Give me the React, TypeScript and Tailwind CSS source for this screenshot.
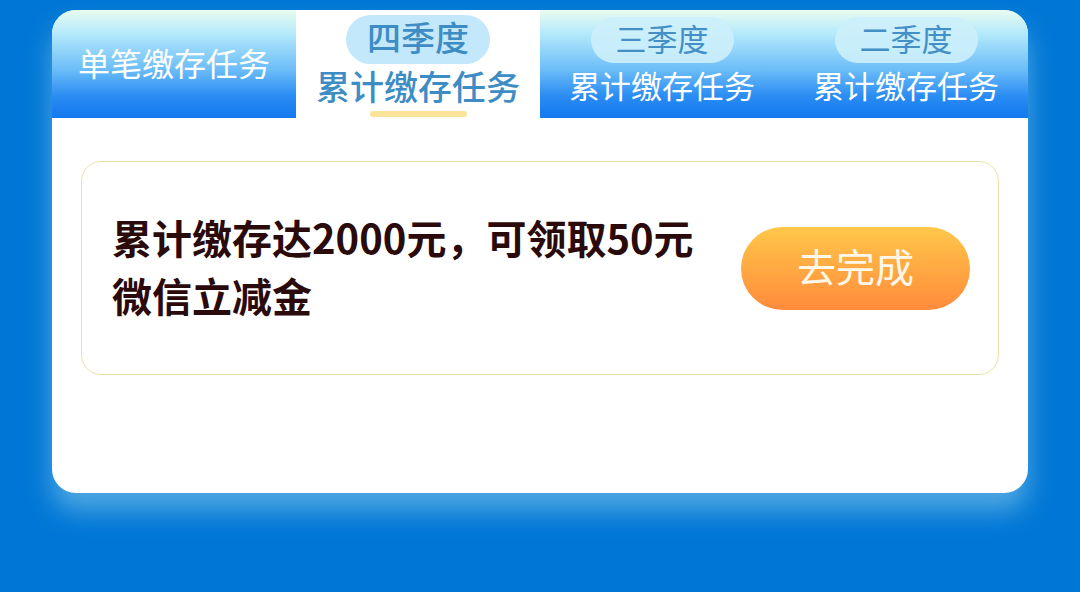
import React from "react";

const font = { fontFamily: '"Noto Sans CJK SC", "Noto Sans", sans-serif' };

function InactiveTab({ season }: { season: string }) {
  return (
    <div className="flex flex-col items-center bg-[linear-gradient(180deg,#e8fcef_0%,#b4e9fb_22%,#6cbdf8_55%,#2a8cf3_80%,#1279ef_100%)]">
      <div className="mt-[7px] flex h-[46px] w-[143px] items-center justify-center rounded-full bg-[#cdeffb]/90 pb-[5px] text-[31px] leading-none text-[#4490c6]">
        {season}
      </div>
      <div className="mt-[4px] text-[31px] leading-[36px] text-white">累计缴存任务</div>
    </div>
  );
}

export default function App() {
  return (
    <div className="h-[592px] w-full bg-[#0077d6] px-[52px] pt-[10px]" style={font}>
      <div className="h-[483px] overflow-hidden rounded-[24px] bg-white shadow-[0_18px_26px_rgba(130,200,235,0.6)]">
        <div className="grid h-[108px] grid-cols-4">
          <div className="flex items-center justify-center bg-[linear-gradient(180deg,#e8fcef_0%,#b4e9fb_22%,#6cbdf8_55%,#2a8cf3_80%,#1279ef_100%)] pb-[4px]">
            <span className="text-[32px] leading-none text-white">单笔缴存任务</span>
          </div>
          <div className="flex flex-col items-center bg-white">
            <div className="mt-[5px] flex h-[49px] w-[144px] items-center justify-center rounded-full bg-[#c4e8fb] pb-[5px] text-[34px] font-medium leading-none text-[#3d8dc4]">
              四季度
            </div>
            <div className="mt-[2px] text-[34px] font-medium leading-[40px] text-[#3d8dc4]">累计缴存任务</div>
            <div className="mt-[5px] h-[6px] w-[97px] rounded-full bg-[#fbe39a]" />
          </div>
          <InactiveTab season="三季度" />
          <InactiveTab season="二季度" />
        </div>
        <div className="px-[29px] pt-[43px]">
          <div className="flex h-[214px] items-center justify-between rounded-[20px] border border-[#ebe1a6] pl-[30px] pr-[28px]">
            <div className="pb-[5px] text-[40px] font-bold leading-[58px] text-[#2a0a0a]">
              累计缴存达2000元，可领取50元
              <br />
              微信立减金
            </div>
            <div className="flex h-[83px] w-[229px] items-center justify-center rounded-full bg-[linear-gradient(180deg,#ffc74a_0%,#ff8b3b_100%)] pb-[5px] text-[39px] leading-none text-[#fff8e8]">
              去完成
            </div>
          </div>
        </div>
      </div>
    </div>
  );
}
